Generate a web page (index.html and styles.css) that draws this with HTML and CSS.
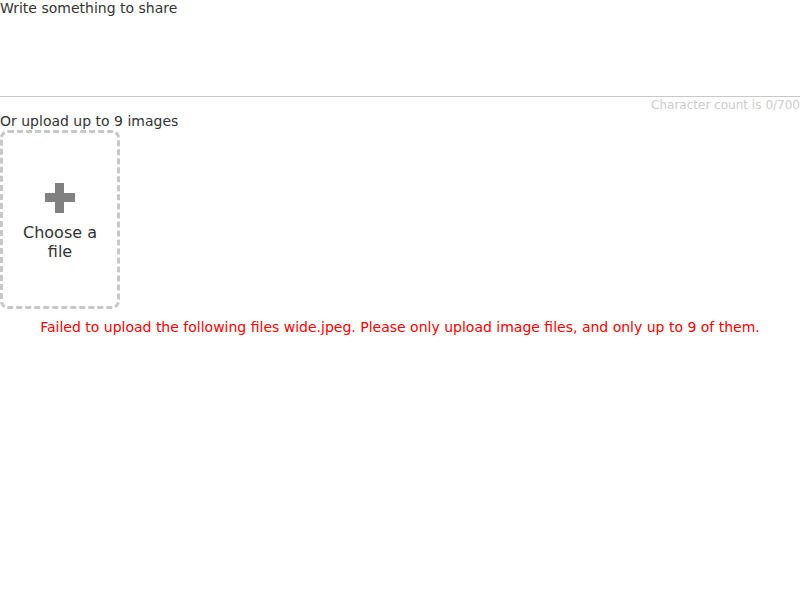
FILE: index.html
```html
<!DOCTYPE html>
<html>
<head>
<meta charset="utf-8">
<link rel="stylesheet" href="styles.css">
</head>
<body>
<div class="composer">
  <div class="textarea">Write something to share</div>
  <div class="count">Character count is<span class="num">0/700</span></div>
  <div class="upload-label">Or upload up to 9 images</div>
  <div class="dropzone">
    <div class="plus"><span class="h"></span><span class="v"></span></div>
    <div class="choose">Choose a file</div>
  </div>
  <div class="error">Failed to upload the following files wide.jpeg. Please only upload image files, and only up to 9 of them.</div>
</div>
</body>
</html>
```
FILE: styles.css
```css
html, body {
  margin: 0;
  padding: 0;
  background: #fff;
}
body {
  font-family: "DejaVu Sans", sans-serif;
  color: #333;
}
.composer {
  display: flex;
  flex-direction: column;
}
.textarea {
  height: 97px;
  box-sizing: border-box;
  border-bottom: 1px solid #c8c8c8;
  font-size: 14px;
  line-height: 17px;
  color: #333;
}
.count {
  text-align: right;
  font-size: 12px;
  line-height: 16px;
  color: #ccc;
}
.count .num {
  margin-left: 4px;
}
.upload-label {
  font-size: 14px;
  line-height: 17px;
  color: #333;
}
.dropzone {
  width: 120px;
  height: 179px;
  box-sizing: border-box;
  border: 3px dashed #c8c8c8;
  border-radius: 8px;
  padding-top: 4px;
  display: flex;
  flex-direction: column;
  align-items: center;
  justify-content: center;
  gap: 10px;
}
.plus {
  position: relative;
  width: 30px;
  height: 30px;
}
.plus .h, .plus .v {
  position: absolute;
  background: #808080;
}
.plus .h {
  left: 0;
  top: 10px;
  width: 30px;
  height: 9px;
}
.plus .v {
  top: 0;
  left: 10px;
  width: 9px;
  height: 30px;
}
.choose {
  font-size: 16px;
  line-height: 19px;
  text-align: center;
  width: 80px;
  color: #333;
}
.error {
  margin-top: 10px;
  text-align: center;
  font-size: 14px;
  line-height: 17px;
  color: #f00;
}
```
